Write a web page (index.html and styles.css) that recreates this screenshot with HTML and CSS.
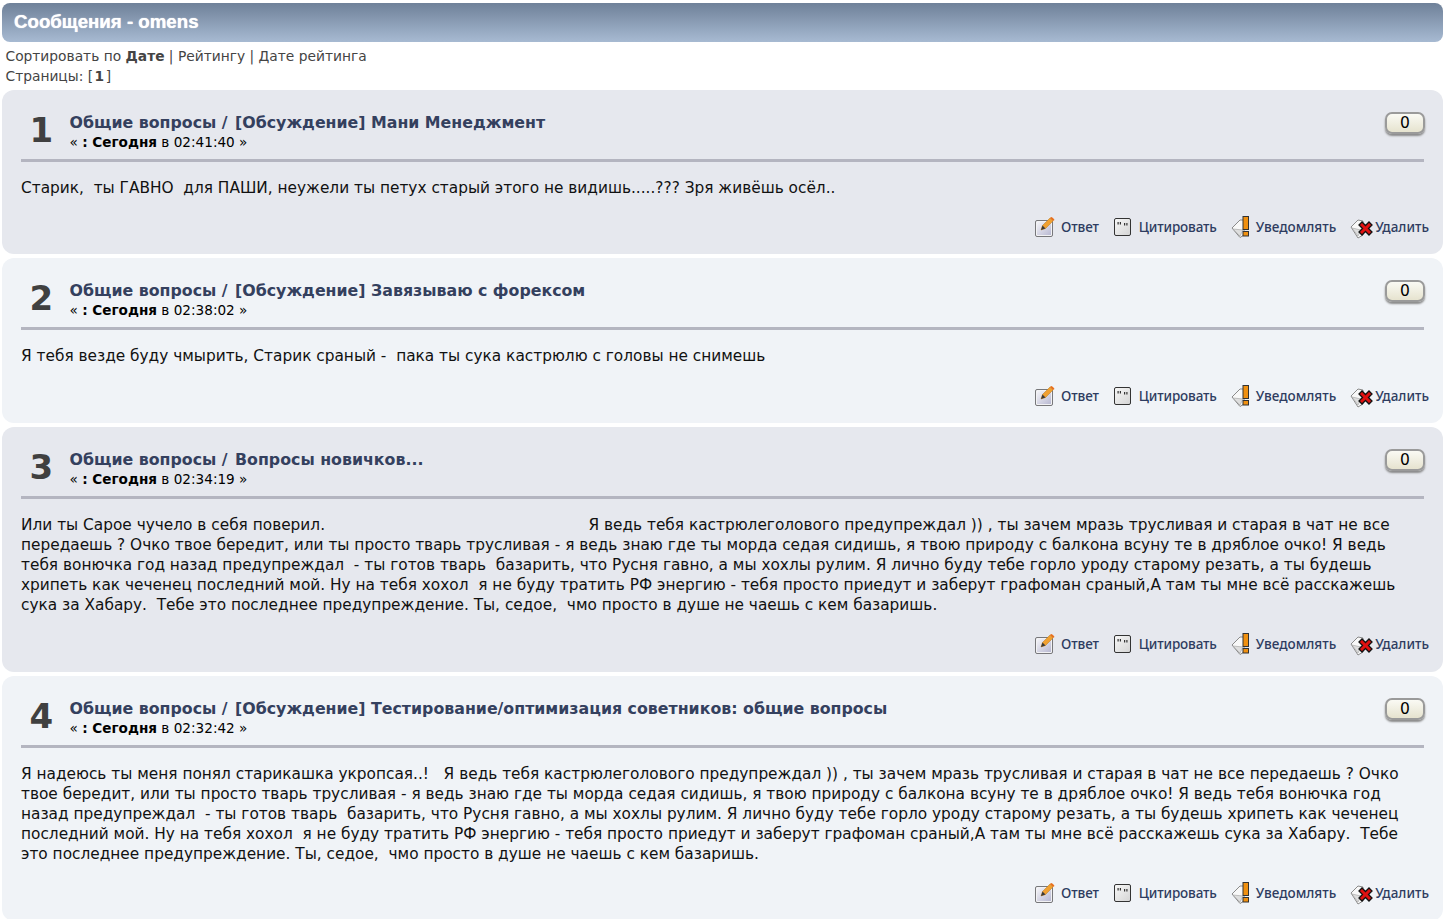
FILE: index.html
```html
<!doctype html>
<html lang="ru">
<head>
  <meta charset="UTF-8">
  <title>Сообщения - omens</title>
  <link rel="stylesheet" href="styles.css">
</head>
<body>
  <svg class="sprites" width="0" height="0">
    <defs>
      <linearGradient id="g-page" x1="0" y1="0" x2="1" y2="1">
        <stop offset="0" stop-color="#f4f4f8"/>
        <stop offset="1" stop-color="#b9b9d2"/>
      </linearGradient>
      <linearGradient id="g-quote" x1="0" y1="0" x2="1" y2="1">
        <stop offset="0" stop-color="#f8f8f8"/>
        <stop offset="1" stop-color="#d4d4d4"/>
      </linearGradient>
    </defs>
    <symbol id="i-reply" viewBox="0 0 20 20">
      <rect x=".5" y="3.500" width="17" height="16" rx="1.500" fill="#f2f2f4" stroke="#77777a"/>
      <rect x="2" y="5" width="14" height="13" fill="url(#g-page)"/>
      <path d="M6 13l1.500-4.500L15 1l3 3-7.500 7.500z" fill="#f0a030" stroke="#b87818" stroke-width=".5"/>
      <path d="M6 13l1.500-4.500 3 3z" fill="#3a3a3a"/>
      <path d="M15 1l1-1c1 .2 3 1.500 3.500 3L18 4z" fill="#e8701c"/>
    </symbol>
    <symbol id="i-quote" viewBox="0 0 20 20">
      <rect x="1.500" y="1.500" width="16" height="17" rx="1.500" fill="url(#g-quote)" stroke="#333"/>
      <path d="M4.500 5h1.200v2.500H4.500zM6.800 5H8v2.500H6.800zM11 6h1.200v2.500H11zM13.300 6h1.200v2.500h-1.200z" fill="#333"/>
    </symbol>
    <symbol id="i-notify" viewBox="0 0 24 24">
      <path d="M1 13l8-8 4 0v15l-4 2.500z" fill="#f8f8f8" stroke="#8a8a8a"/>
      <path d="M2 14l10 1-3 6z" fill="#dedede" stroke="#a0a0a0" stroke-width=".6"/>
      <rect x="12" y="1.500" width="5.500" height="13" fill="#f09010" stroke="#333"/>
      <rect x="12" y="16.500" width="5.500" height="4.500" fill="#f09010" stroke="#333"/>
    </symbol>
    <symbol id="i-remove" viewBox="0 0 24 24">
      <path d="M1 12l7-7 5 1v14l-5 3z" fill="#f8f8f8" stroke="#8a8a8a"/>
      <path d="M2 13l9 2-3 6z" fill="#dedede" stroke="#a0a0a0" stroke-width=".6"/>
      <path d="M9 10l3-3 3.500 3.500L19 7l3 3-3.500 3.500L22 17l-3 3-3.500-3.500L12 20l-3-3 3.500-3.500z" fill="#e01010" stroke="#111" stroke-width="1.300"/>
    </symbol>
  </svg>

  <div class="wrap">
    <h1 class="cat-bar">Сообщения - omens</h1>

    <div class="sort-info">
      Сортировать по <b>Дате</b> | <a href="#">Рейтингу</a> | <a href="#">Дате рейтинга</a><br>
      Страницы: [<b class="cur-page">1</b>]
    </div>

    <div class="post post-a">
      <div class="post-head">
        <div class="counter">1</div>
        <div class="head-text">
          <div class="post-title"><a href="#">Общие вопросы</a> <span class="sep">/</span> <a href="#">[Обсуждение] Мани Менеджмент</a></div>
          <div class="post-date">« <b>: Сегодня</b> в 02:41:40 »</div>
        </div>
        <span class="karma">0</span>
      </div>
      <div class="post-body">Старик,&nbsp; ты ГАВНО&nbsp; для ПАШИ, неужели ты петух старый этого не видишь.....??? Зря живёшь осёл..</div>
      <div class="post-actions">
        <a href="#"><svg class="ic-sq"><use href="#i-reply"/></svg>Ответ</a>
        <a href="#"><svg class="ic-sq"><use href="#i-quote"/></svg>Цитировать</a>
        <a href="#"><svg class="ic-lg"><use href="#i-notify"/></svg>Уведомлять</a>
        <a href="#"><svg class="ic-lg"><use href="#i-remove"/></svg>Удалить</a>
      </div>
    </div>

    <div class="post post-b">
      <div class="post-head">
        <div class="counter">2</div>
        <div class="head-text">
          <div class="post-title"><a href="#">Общие вопросы</a> <span class="sep">/</span> <a href="#">[Обсуждение] Завязываю с форексом</a></div>
          <div class="post-date">« <b>: Сегодня</b> в 02:38:02 »</div>
        </div>
        <span class="karma">0</span>
      </div>
      <div class="post-body">Я тебя везде буду чмырить, Старик сраный -&nbsp; пака ты сука кастрюлю с головы не снимешь</div>
      <div class="post-actions">
        <a href="#"><svg class="ic-sq"><use href="#i-reply"/></svg>Ответ</a>
        <a href="#"><svg class="ic-sq"><use href="#i-quote"/></svg>Цитировать</a>
        <a href="#"><svg class="ic-lg"><use href="#i-notify"/></svg>Уведомлять</a>
        <a href="#"><svg class="ic-lg"><use href="#i-remove"/></svg>Удалить</a>
      </div>
    </div>

    <div class="post post-a">
      <div class="post-head">
        <div class="counter">3</div>
        <div class="head-text">
          <div class="post-title"><a href="#">Общие вопросы</a> <span class="sep">/</span> <a href="#">Вопросы новичков...</a></div>
          <div class="post-date">« <b>: Сегодня</b> в 02:34:19 »</div>
        </div>
        <span class="karma">0</span>
      </div>
      <div class="post-body">
        Или ты Сарое чучело в себя поверил.&nbsp;&nbsp;&nbsp;&nbsp;&nbsp;&nbsp;&nbsp;&nbsp;&nbsp;&nbsp;&nbsp;&nbsp;&nbsp;&nbsp;&nbsp;&nbsp;&nbsp;&nbsp;&nbsp;&nbsp;&nbsp;&nbsp;&nbsp;&nbsp;&nbsp;&nbsp;&nbsp;&nbsp;&nbsp;&nbsp;&nbsp;&nbsp;&nbsp;&nbsp;&nbsp;&nbsp;&nbsp;&nbsp;&nbsp;&nbsp;&nbsp;&nbsp;&nbsp;&nbsp;&nbsp;&nbsp;&nbsp;&nbsp;&nbsp;&nbsp;&nbsp;&nbsp;&nbsp;&nbsp;Я ведь тебя кастрюлеголового предупреждал )) , ты зачем мразь трусливая и старая в чат не все<br>
        передаешь ? Очко твое бередит, или ты просто тварь трусливая - я ведь знаю где ты морда седая сидишь, я твою природу с балкона всуну те в дряблое очко! Я ведь<br>
        тебя вонючка год назад предупреждал&nbsp; - ты готов тварь&nbsp; базарить, что Русня гавно, а мы хохлы рулим. Я лично буду тебе горло уроду старому резать, а ты будешь<br>
        хрипеть как чеченец последний мой. Ну на тебя хохол&nbsp; я не буду тратить РФ энергию - тебя просто приедут и заберут графоман сраный,А там ты мне всё расскажешь<br>
        сука за Хабару.&nbsp; Тебе это последнее предупреждение. Ты, седое,&nbsp; чмо просто в душе не чаешь с кем базаришь.
      </div>
      <div class="post-actions">
        <a href="#"><svg class="ic-sq"><use href="#i-reply"/></svg>Ответ</a>
        <a href="#"><svg class="ic-sq"><use href="#i-quote"/></svg>Цитировать</a>
        <a href="#"><svg class="ic-lg"><use href="#i-notify"/></svg>Уведомлять</a>
        <a href="#"><svg class="ic-lg"><use href="#i-remove"/></svg>Удалить</a>
      </div>
    </div>

    <div class="post post-b">
      <div class="post-head">
        <div class="counter">4</div>
        <div class="head-text">
          <div class="post-title"><a href="#">Общие вопросы</a> <span class="sep">/</span> <a href="#">[Обсуждение] Тестирование/оптимизация советников: общие вопросы</a></div>
          <div class="post-date">« <b>: Сегодня</b> в 02:32:42 »</div>
        </div>
        <span class="karma">0</span>
      </div>
      <div class="post-body">
        Я надеюсь ты меня понял старикашка укропсая..!&nbsp;&nbsp; Я ведь тебя кастрюлеголового предупреждал )) , ты зачем мразь трусливая и старая в чат не все передаешь ? Очко<br>
        твое бередит, или ты просто тварь трусливая - я ведь знаю где ты морда седая сидишь, я твою природу с балкона всуну те в дряблое очко! Я ведь тебя вонючка год<br>
        назад предупреждал&nbsp; - ты готов тварь&nbsp; базарить, что Русня гавно, а мы хохлы рулим. Я лично буду тебе горло уроду старому резать, а ты будешь хрипеть как чеченец<br>
        последний мой. Ну на тебя хохол&nbsp; я не буду тратить РФ энергию - тебя просто приедут и заберут графоман сраный,А там ты мне всё расскажешь сука за Хабару.&nbsp; Тебе<br>
        это последнее предупреждение. Ты, седое,&nbsp; чмо просто в душе не чаешь с кем базаришь.
      </div>
      <div class="post-actions">
        <a href="#"><svg class="ic-sq"><use href="#i-reply"/></svg>Ответ</a>
        <a href="#"><svg class="ic-sq"><use href="#i-quote"/></svg>Цитировать</a>
        <a href="#"><svg class="ic-lg"><use href="#i-notify"/></svg>Уведомлять</a>
        <a href="#"><svg class="ic-lg"><use href="#i-remove"/></svg>Удалить</a>
      </div>
    </div>
  </div>
</body>
</html>
```

FILE: styles.css
```css
* {
  box-sizing: border-box;
}

body {
  margin: 0;
  background-color: #fff;
  font-family: "DejaVu Sans", Verdana, sans-serif;
  color: #000;
  height: 919px;
  overflow: hidden;
}

a {
  color: #34405e;
  text-decoration: none;
}

.sprites {
  display: block;
}

.wrap {
  padding: 3px 2px 0;
}

.cat-bar {
  margin: 0;
  height: 39px;
  padding: 0 12px;
  font: bold 18.700px/37px "Liberation Sans", Arial, sans-serif;
  color: #fff;
  text-shadow: 0 0 1px #fff;
  border-radius: 8px;
  background: linear-gradient(#6f8199, #a7bad2);
}

.sort-info {
  padding: 4px 3.500px 0;
  font-size: 13.800px;
  line-height: 20px;
  color: #444;
  height: 48px;
}

.sort-info a {
  color: #444;
}

.cur-page {
  margin: 0 1.500px;
}

.post {
  border-radius: 12px;
  padding: 20px 19px 12.350px;
  margin-bottom: 4px;
}

.post-a {
  background-color: #e6e8ee;
}

.post-b {
  background-color: #f0f3f7;
}

.post-head {
  display: flex;
  align-items: flex-start;
  height: 52px;
  padding-top: 1px;
  border-bottom: 3px solid #b4b5c0;
}

.counter {
  width: 48.500px;
  padding-left: 8.500px;
  font: bold 34px/38px "DejaVu Sans", Verdana, sans-serif;
  color: #404040;
}

.head-text {
  flex: 1;
  padding-top: 1px;
}

.post-title {
  font-size: 15.800px;
  font-weight: bold;
  line-height: 21px;
  color: #34405e;
}

.sep {
  margin-right: 2px;
}

.post-date {
  font-size: 13.600px;
  line-height: 19px;
}

.karma {
  width: 40px;
  height: 22px;
  margin-top: 1px;
  margin-right: -1px;
  text-align: center;
  font-size: 15.500px;
  line-height: 19px;
  border: 2px solid #9a9a9a;
  border-radius: 7px;
  background: linear-gradient(#fafaf4, #e6e3cf);
  box-shadow: 0 2px 2px #8b8b8b;
}

.post-body {
  margin-top: 16px;
  font-size: 15.350px;
  line-height: 20.100px;
  color: #111;
}

.post-actions {
  display: flex;
  justify-content: flex-end;
  align-items: center;
  height: 30px;
  margin-top: 14px;
  margin-right: -5px;
  gap: 14px;
}

.post-actions a {
  display: flex;
  align-items: center;
  gap: 6px;
  font: 500 13.500px "Noto Sans", Tahoma, sans-serif;
  color: #2e3c60;
}

.post-actions a:nth-child(-n+2) {
  letter-spacing: -.150px;
}

.ic-sq {
  width: 20px;
  height: 20px;
}

.ic-lg {
  width: 24px;
  height: 24px;
  margin-right: -5px;
}
```
